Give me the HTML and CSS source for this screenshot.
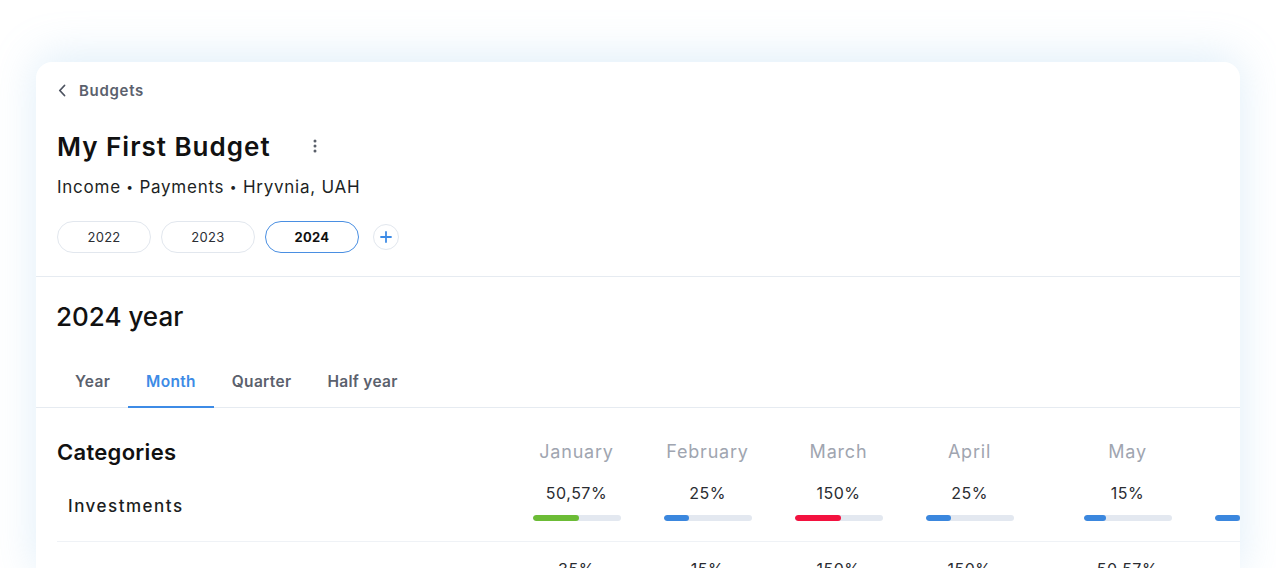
FILE: index.html
```html
<!DOCTYPE html>
<html lang="en">
<head>
  <meta charset="UTF-8" />
  <meta name="viewport" content="width=device-width, initial-scale=1" />
  <title>My First Budget</title>
  <link rel="stylesheet" href="styles.css">
</head>
<body>

  <div class="card">
    <div class="head">
      <a class="back" href="#">
        <svg width="8" height="13" viewBox="0 0 8 13"><path d="M6.5 1.5 L1.8 6.5 L6.5 11.5" fill="none" stroke="#4d5360" stroke-width="1.8" stroke-linecap="round" stroke-linejoin="round"/></svg>
        <span>Budgets</span>
      </a>

      <div class="title-row">
        <h1>My First Budget</h1>
        <button class="kebab">
          <svg width="4" height="16" viewBox="0 0 4 16"><circle cx="2" cy="3" r="1.5" fill="#5a5f6a"/><circle cx="2" cy="8" r="1.5" fill="#5a5f6a"/><circle cx="2" cy="13" r="1.5" fill="#5a5f6a"/></svg>
        </button>
      </div>

      <p class="meta">Income <span class="dot">•</span> Payments <span class="dot">•</span> Hryvnia, UAH</p>

      <div class="years">
        <button class="pill">2022</button>
        <button class="pill">2023</button>
        <button class="pill active">2024</button>
        <button class="add">
          <svg width="12" height="12" viewBox="0 0 12 12"><path d="M6 1 V11 M1 6 H11" stroke="#3d8be6" stroke-width="1.8" stroke-linecap="round"/></svg>
        </button>
      </div>
    </div>

    <div class="year-block">
      <h2>2024 year</h2>
    </div>

    <div class="tabs">
      <div class="tab">Year</div>
      <div class="tab active">Month</div>
      <div class="tab">Quarter</div>
      <div class="tab">Half year</div>
    </div>

    <div class="table">
      <div class="row header">
        <div class="label"><h3>Categories</h3></div>
        <div class="cell month">January</div>
        <div class="cell month">February</div>
        <div class="cell month">March</div>
        <div class="cell month">April</div>
        <div class="cell month wide">May</div>
        <div class="cell month"></div>
      </div>

      <div class="row line">
        <div class="label name">Investments</div>
        <div class="cell">
          <div class="value">50,57%</div>
          <div class="bar"><div class="fill green" style="width: 53%"></div></div>
        </div>
        <div class="cell">
          <div class="value">25%</div>
          <div class="bar"><div class="fill" style="width: 29%"></div></div>
        </div>
        <div class="cell">
          <div class="value">150%</div>
          <div class="bar"><div class="fill red" style="width: 53%"></div></div>
        </div>
        <div class="cell">
          <div class="value">25%</div>
          <div class="bar"><div class="fill" style="width: 29%"></div></div>
        </div>
        <div class="cell wide">
          <div class="value">15%</div>
          <div class="bar"><div class="fill" style="width: 26%"></div></div>
        </div>
        <div class="cell">
          <div class="value"></div>
          <div class="bar"><div class="fill" style="width: 29%"></div></div>
        </div>
      </div>

      <div class="row line">
        <div class="label name"></div>
        <div class="cell"><div class="value">35%</div></div>
        <div class="cell"><div class="value">15%</div></div>
        <div class="cell"><div class="value">150%</div></div>
        <div class="cell"><div class="value">150%</div></div>
        <div class="cell wide"><div class="value">50,57%</div></div>
        <div class="cell"><div class="value"></div></div>
      </div>
    </div>
  </div>

  <div class="fade"></div>

</body>
</html>
```

FILE: styles.css
```css
* {
  margin: 0;
  padding: 0;
  box-sizing: border-box;
}

html, body {
  width: 100%;
  height: 100%;
  overflow: hidden;
  background: #fff;
  font-family: Inter, "Noto Sans", sans-serif;
  color: #16181c;
}

body {
  padding: 62px 36px 0;
}

button {
  font-family: inherit;
  background: none;
  border: none;
  cursor: pointer;
}

.card {
  background: #fff;
  border-radius: 16px 16px 0 0;
  height: 516px;
  overflow: hidden;
  box-shadow: 0 -6px 44px rgba(140, 195, 235, 0.28);
}

/* header */

.head {
  padding: 19px 21px 23px;
  border-bottom: 1px solid #e6ebf1;
}

.back {
  display: flex;
  align-items: center;
  gap: 13px;
  height: 18px;
  color: #5b616d;
  text-decoration: none;
  font-size: 15px;
  font-weight: 600;
  letter-spacing: 0.7px;
}

.back svg {
  margin-left: 1px;
}

.title-row {
  display: flex;
  align-items: center;
  margin-top: 31px;
  height: 32px;
}

.title-row h1 {
  font-size: 26px;
  font-weight: 600;
  letter-spacing: 1px;
  color: #111;
}

.kebab {
  margin-left: 36px;
  width: 16px;
  height: 24px;
  display: flex;
  align-items: center;
  justify-content: center;
}

.meta {
  margin-top: 13px;
  font-size: 17px;
  line-height: 24px;
  letter-spacing: 0.75px;
  color: #1d1f24;
}

.meta .dot {
  font-size: 12px;
  vertical-align: 2px;
}

.years {
  display: flex;
  align-items: center;
  gap: 10px;
  margin-top: 22px;
}

.pill {
  width: 94px;
  height: 32px;
  border-radius: 16px;
  border: 1px solid #e2e7ee;
  font-size: 13px;
  letter-spacing: 0.3px;
  color: #2b2e34;
  background: #fff;
}

.pill.active {
  border-color: #4a8fe2;
  font-weight: 700;
  color: #111;
}

.add {
  width: 26px;
  height: 26px;
  border-radius: 50%;
  border: 1px solid #e2e7ee;
  display: flex;
  align-items: center;
  justify-content: center;
  margin-left: 4px;
}

/* year + tabs */

.year-block {
  padding: 24px 20px 0;
}

.year-block h2 {
  font-size: 26px;
  line-height: 32px;
  font-weight: 500;
  color: #111;
}

.tabs {
  display: flex;
  margin-top: 27px;
  padding-left: 21px;
  border-bottom: 1px solid #e6ebf1;
}

.tab {
  padding: 12px 18px 14px;
  line-height: 20px;
  font-size: 15.5px;
  font-weight: 600;
  letter-spacing: 0.3px;
  color: #5b616d;
  border-bottom: 2px solid transparent;
  margin-bottom: -1px;
}

.tab.active {
  color: #3d8be6;
  border-bottom-color: #3d8be6;
}

/* table */

.table {
  padding: 30px 0 0 21px;
}

.row {
  display: flex;
  align-items: center;
}

.row.line {
  border-bottom: 1px solid #eff2f6;
  padding: 14px 0 20px;
}

.label {
  width: 454px;
  flex-shrink: 0;
}

.label h3 {
  font-size: 22px;
  line-height: 28px;
  font-weight: 600;
  letter-spacing: 0.3px;
  color: #111;
}

.name {
  padding-left: 11px;
  padding-top: 10px;
  font-size: 17px;
  font-weight: 500;
  letter-spacing: 1.5px;
  color: #1b1d22;
}

.cell {
  width: 131px;
  flex-shrink: 0;
  display: flex;
  flex-direction: column;
  align-items: center;
}

.cell.wide {
  margin-left: 27px;
}

.month {
  font-size: 18px;
  line-height: 28px;
  letter-spacing: 0.8px;
  color: #a0a5b0;
}

.value {
  font-size: 16px;
  line-height: 26px;
  min-height: 26px;
  letter-spacing: 0.5px;
  color: #2a2c31;
}

.bar {
  margin-top: 9px;
  width: 88px;
  height: 6px;
  border-radius: 3px;
  background: #e3e8f0;
  overflow: hidden;
}

.fill {
  height: 100%;
  border-radius: 3px;
  background: #3b87de;
}

.fill.green {
  background: #6cbc36;
}

.fill.red {
  background: #f3123f;
}

.fade {
  position: fixed;
  left: 0;
  right: 0;
  bottom: 0;
  height: 10px;
  background: #fff;
}
```
